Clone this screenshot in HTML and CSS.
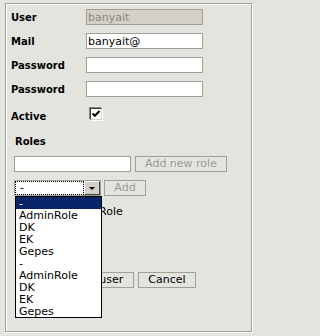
FILE: index.html
```html
<!DOCTYPE html>
<html>
<head>
<meta charset="utf-8">
<link rel="stylesheet" href="styles.css">
</head>
<body>
<div class="fs">
  <div class="form">
    <div class="row"><span class="lbl">User</span><input class="inp inp-dis" value="banyait" disabled></div>
    <div class="row"><span class="lbl">Mail</span><input class="inp" value="banyait@"></div>
    <div class="row"><span class="lbl">Password</span><input class="inp" type="password"></div>
    <div class="row"><span class="lbl">Password</span><input class="inp" type="password"></div>
    <div class="row row-active"><span class="lbl">Active</span><span class="cb"><svg width="10" height="10" viewBox="0 0 10 10"><path d="M1.5 4.5 L3.8 6.8 L8.5 2" fill="none" stroke="#000" stroke-width="2"/></svg></span></div>
  </div>
  <div class="roles">
    <div class="roles-title">Roles</div>
    <div class="rrow"><input class="inp role-inp"><button class="btn btn-dis btn-addrole">Add new role</button></div>
    <div class="rrow">
      <div class="combo"><div class="combo-val">-</div><div class="combo-btn"><span class="tri"></span></div></div>
      <button class="btn btn-dis btn-add">Add</button>
    </div>
    <div class="assigned">AdminRole</div>
  </div>
  <div class="actions"><button class="btn btn-save">Save user</button><button class="btn btn-cancel">Cancel</button></div>
  <ul class="dropdown">
    <li class="sel">-</li>
    <li>AdminRole</li>
    <li>DK</li>
    <li>EK</li>
    <li>Gepes</li>
    <li>-</li>
    <li>AdminRole</li>
    <li>DK</li>
    <li>EK</li>
    <li>Gepes</li>
  </ul>
</div>
</body>
</html>
```
FILE: styles.css
```css
html, body {
  margin: 0;
  padding: 0;
  background: #e4e4de;
}
body {
  font-family: "DejaVu Sans", Verdana, sans-serif;
  font-size: 11px;
  color: #000;
  width: 259px;
  height: 336px;
  overflow: hidden;
}
.fs {
  position: relative;
  box-sizing: border-box;
  margin: 3px 0 0 5px;
  width: 247px;
  height: 329px;
  border: 1px solid #a0a096;
  box-shadow: inset 1px 1px 0 #fff, 1px 1px 0 #fff;
  padding: 5px 5px 0 5px;
}
.form {
  display: flex;
  flex-direction: column;
  gap: 8px;
}
.row {
  display: flex;
  align-items: center;
  height: 16px;
}
.row-active {
  margin-top: 3px;
}
.lbl {
  width: 75px;
  font-weight: bold;
  font-size: 10px;
}
.inp {
  box-sizing: border-box;
  width: 117px;
  height: 16px;
  margin: 0;
  padding: 0 1px;
  border: 1px solid #a0a096;
  background: #fff;
  font-family: "DejaVu Sans", Verdana, sans-serif;
  font-size: 11px;
  color: #000;
  outline: none;
}
.inp-dis {
  background: #d4d0c8;
  color: #8a8a84;
}
.cb {
  align-self: flex-start;
  box-sizing: border-box;
  width: 12px;
  height: 12px;
  margin-left: 4px;
  background: #fff;
  border-top: 1px solid #404040;
  border-left: 1px solid #404040;
  border-right: 1px solid #d4d0c8;
  border-bottom: 1px solid #d4d0c8;
  box-shadow: -1px -1px 0 #808080, 1px 1px 0 #fff;
  display: flex;
}
.cb svg {
  display: block;
}
.roles {
  margin-top: 12px;
}
.roles-title {
  margin-left: 4px;
  font-weight: bold;
  font-size: 10px;
  line-height: 12px;
  height: 12px;
}
.rrow {
  display: flex;
  height: 16px;
  margin-top: 8px;
  margin-left: 3px;
}
.btn {
  box-sizing: border-box;
  height: 16px;
  margin: 0;
  padding: 0;
  border: 1px solid #a0a096;
  background: #e4e4de;
  font-family: "DejaVu Sans", Verdana, sans-serif;
  font-size: 11px;
  line-height: 14px;
  color: #000;
  text-align: center;
}
.btn-dis {
  color: #9a9a94;
}
.btn-addrole {
  width: 92px;
  margin-left: 4px;
}
.btn-add {
  width: 42px;
  margin-left: 3px;
}
.combo {
  box-sizing: border-box;
  width: 87px;
  height: 16px;
  border: 1px solid #a0a096;
  background: #fff;
  display: flex;
}
.combo-val {
  flex: 1;
  border: 1px dotted #000;
  padding-left: 4px;
  line-height: 12px;
}
.combo-btn {
  box-sizing: border-box;
  width: 16px;
  background: #d4d0c8;
  border-top: 1px solid #fff;
  border-left: 1px solid #fff;
  border-right: 1px solid #404040;
  border-bottom: 1px solid #404040;
  display: flex;
  align-items: center;
  justify-content: center;
}
.tri {
  width: 0;
  height: 0;
  border-left: 3px solid transparent;
  border-right: 3px solid transparent;
  border-top: 3px solid #000;
  margin-top: 1px;
}
.assigned {
  margin-top: 9px;
  margin-left: 53px;
  line-height: 14px;
  height: 14px;
}
.actions {
  display: flex;
  gap: 4px;
  margin-top: 53px;
  margin-left: 47px;
}
.btn-save {
  width: 76px;
}
.btn-cancel {
  width: 58px;
}
.dropdown {
  position: absolute;
  left: 9px;
  top: 192px;
  box-sizing: border-box;
  width: 87px;
  margin: 0;
  padding: 0;
  list-style: none;
  background: #fff;
  border: 1px solid #000;
}
.dropdown li {
  box-sizing: border-box;
  height: 12px;
  padding: 2px 0 0 3px;
  line-height: 10px;
}
.dropdown li.sel {
  background: #0a246a;
  color: #fff;
}
```
